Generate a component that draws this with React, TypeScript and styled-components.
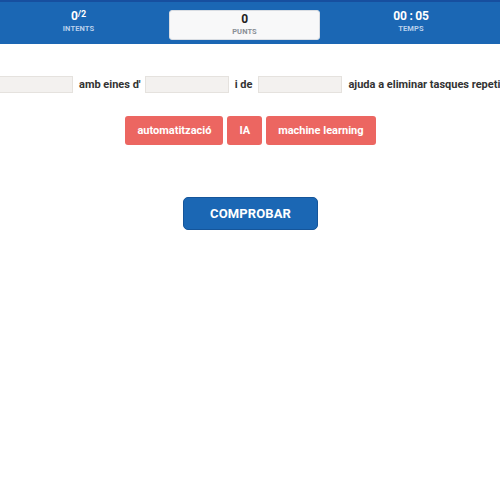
import React from "react";
import styled, { createGlobalStyle } from "styled-components";

const Global = createGlobalStyle`
  html, body { margin: 0; padding: 0; overflow: hidden; background: #fff; }
  body { font-family: Roboto, "Liberation Sans", sans-serif; width: 500px; height: 500px; }
`;

const Header = styled.header`
  height: 42px;
  background: #1b67b4;
  border-top: 2px solid #174f9f;
  display: grid;
  grid-template-columns: 157px 151px 158px;
  column-gap: 12px;
  align-items: center;
`;

const Stat = styled.div<{ $boxed?: boolean }>`
  height: 30px;
  display: flex;
  flex-direction: column;
  align-items: center;
  justify-content: center;
  box-sizing: border-box;
  border-radius: 3px;
  background: ${(p) => (p.$boxed ? "#f8f8f9" : "transparent")};
  border: 1px solid ${(p) => (p.$boxed ? "#d9dde3" : "transparent")};
  color: ${(p) => (p.$boxed ? "#222" : "#fff")};
  margin-top: ${(p) => (p.$boxed ? "3px" : "-3px")};
`;

const Value = styled.div`
  font-size: 12px;
  font-weight: 700;
  line-height: 13px;
  letter-spacing: -0.2px;
`;

const Sup = styled.sup`
  font-size: 9px;
  vertical-align: top;
  line-height: 9px;
`;

const Label = styled.div<{ $dark?: boolean }>`
  font-size: 7.5px;
  font-weight: 700;
  line-height: 11px;
  letter-spacing: 0.1px;
  color: ${(p) => (p.$dark ? "#8a8f96" : "#b9d0ec")};
`;

const Sentence = styled.div`
  margin-top: 32px;
  margin-left: -11px;
  display: flex;
  align-items: center;
  gap: 6px;
  white-space: nowrap;
  font-size: 11px;
  font-weight: 700;
  color: #333;
`;

const Blank = styled.span`
  display: inline-block;
  flex: none;
  width: 84px;
  height: 17px;
  box-sizing: border-box;
  background: #f3f1ef;
  border: 1px solid #e5e2de;
`;

const Words = styled.span<{ $tight?: boolean }>`
  flex: none;
  margin-right: ${(p) => (p.$tight ? "-2px" : "0")};
`;

const Chips = styled.div`
  margin-top: 23px;
  display: flex;
  justify-content: center;
  gap: 4px;
  padding-left: 1px;
`;

const Chip = styled.div`
  height: 29px;
  padding: 0 12px;
  display: flex;
  align-items: center;
  border-radius: 3px;
  background: #ec6661;
  color: #fff;
  font-size: 11px;
  font-weight: 700;
`;

const Actions = styled.div`
  margin-top: 52px;
  display: flex;
  justify-content: center;
  padding-left: 1px;
`;

const Check = styled.button`
  width: 135px;
  height: 33px;
  border: 1px solid #15559a;
  border-radius: 5px;
  background: #1b67b4;
  color: #fff;
  font-family: Roboto, "Liberation Sans", sans-serif;
  font-size: 13px;
  font-weight: 700;
  letter-spacing: 0.1px;
`;

export default function App() {
  return (
    <>
      <Global />
      <Header>
        <Stat>
          <Value>
            0<Sup>/2</Sup>
          </Value>
          <Label>INTENTS</Label>
        </Stat>
        <Stat $boxed>
          <Value>0</Value>
          <Label $dark>PUNTS</Label>
        </Stat>
        <Stat>
          <Value>00 : 05</Value>
          <Label>TEMPS</Label>
        </Stat>
      </Header>
      <Sentence>
        <Blank />
        <Words $tight>amb eines d'</Words>
        <Blank />
        <Words>i de</Words>
        <Blank />
        <Words>ajuda a eliminar tasques repetitives.</Words>
      </Sentence>
      <Chips>
        <Chip>automatització</Chip>
        <Chip>IA</Chip>
        <Chip>machine learning</Chip>
      </Chips>
      <Actions>
        <Check>COMPROBAR</Check>
      </Actions>
    </>
  );
}
